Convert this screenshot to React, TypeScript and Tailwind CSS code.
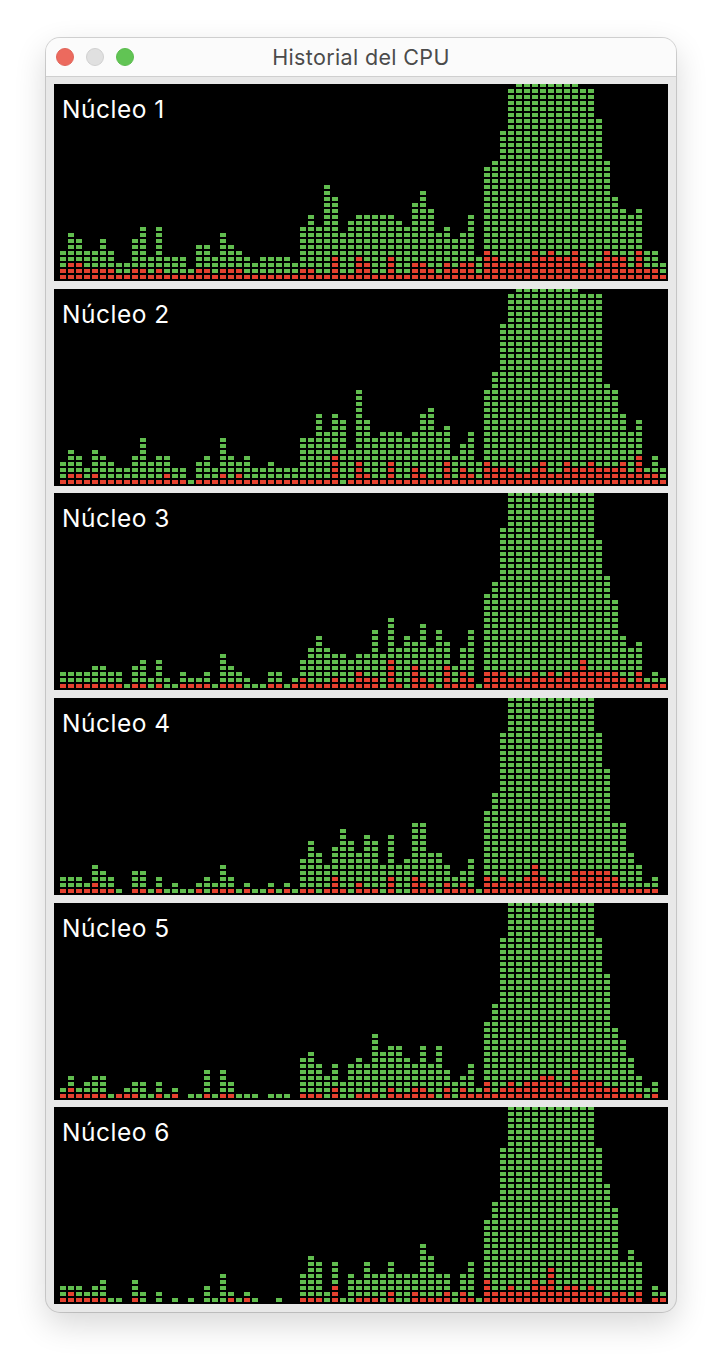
type Core = {
  heights: number[]
  reds: number[]
}

// heights = cells per column, reds = bitmask of red cells counted from the bottom
const cores: Core[] = [
  {
    heights: [
      5, 8, 7, 5, 5, 7, 5, 3, 3, 7, 9, 4, 9, 4, 4, 4, 2, 6, 6, 4, 8, 6, 5, 4, 3, 4, 4,
      4, 4, 3, 9, 11, 9, 16, 14, 8, 10, 11, 11, 11, 11, 11, 10, 9, 13, 15, 12, 8, 9, 7, 8, 11, 4,
      19, 20, 25, 32, 33, 33, 33, 33, 33, 33, 33, 33, 32, 32, 27, 20, 14, 12, 11, 12, 5, 5, 3,
    ],
    reds: [
      3, 7, 7, 3, 3, 3, 3, 1, 1, 3, 3, 1, 3, 1, 1, 1, 1, 3, 3, 1, 3, 3, 3, 1, 1, 1, 1,
      1, 1, 1, 3, 3, 1, 1, 15, 1, 1, 15, 7, 1, 1, 15, 1, 1, 7, 7, 3, 1, 7, 3, 7, 7, 1,
      31, 15, 7, 7, 7, 7, 31, 15, 31, 15, 15, 31, 7, 3, 7, 31, 15, 15, 3, 31, 3, 3, 1,
    ],
  },
  {
    heights: [
      4, 6, 5, 3, 6, 5, 4, 3, 3, 5, 8, 4, 5, 5, 3, 3, 1, 4, 5, 3, 8, 5, 4, 5, 3, 3, 4,
      3, 3, 3, 8, 8, 12, 9, 12, 11, 6, 16, 11, 8, 9, 9, 9, 8, 9, 12, 13, 9, 10, 5, 7, 9, 4,
      16, 19, 27, 32, 33, 33, 33, 33, 33, 33, 33, 33, 32, 32, 32, 17, 16, 12, 9, 11, 3, 5, 3,
    ],
    reds: [
      1, 3, 3, 1, 3, 1, 1, 1, 1, 1, 1, 1, 1, 3, 1, 1, 0, 1, 1, 1, 3, 1, 3, 1, 1, 1, 1,
      1, 1, 1, 1, 1, 1, 1, 31, 0, 1, 15, 3, 1, 1, 15, 1, 1, 7, 3, 1, 1, 15, 1, 7, 3, 1,
      15, 7, 7, 7, 3, 3, 7, 15, 3, 3, 15, 7, 7, 15, 7, 7, 7, 15, 3, 31, 3, 3, 1,
    ],
  },
  {
    heights: [
      3, 3, 3, 3, 4, 4, 3, 3, 1, 4, 5, 2, 5, 2, 1, 3, 2, 2, 3, 1, 6, 4, 3, 2, 1, 1, 3,
      3, 1, 2, 5, 7, 9, 7, 6, 6, 5, 6, 6, 10, 6, 12, 7, 9, 8, 11, 7, 10, 8, 4, 7, 10, 1,
      16, 18, 27, 33, 33, 33, 33, 33, 33, 33, 33, 33, 33, 33, 25, 19, 15, 9, 7, 8, 2, 3, 2,
    ],
    reds: [
      1, 1, 1, 1, 1, 1, 1, 1, 0, 1, 1, 0, 1, 0, 0, 1, 1, 1, 1, 0, 1, 1, 1, 0, 0, 0, 1,
      1, 0, 1, 3, 1, 1, 1, 3, 1, 1, 7, 3, 3, 0, 31, 1, 0, 15, 3, 1, 0, 15, 1, 7, 3, 0,
      7, 7, 7, 3, 3, 3, 7, 3, 7, 3, 7, 7, 31, 7, 7, 7, 7, 3, 1, 7, 1, 1, 1,
    ],
  },
  {
    heights: [
      3, 3, 3, 2, 5, 4, 3, 1, 0, 4, 4, 1, 3, 1, 2, 1, 1, 2, 3, 2, 5, 3, 1, 2, 1, 1, 2,
      1, 2, 1, 6, 9, 7, 5, 8, 11, 9, 7, 10, 9, 5, 10, 5, 6, 12, 12, 7, 7, 5, 3, 4, 6, 1,
      14, 17, 27, 33, 33, 33, 33, 33, 33, 33, 33, 33, 33, 33, 27, 21, 12, 12, 7, 5, 2, 3, 0,
    ],
    reds: [
      1, 1, 1, 1, 3, 1, 1, 0, 0, 1, 1, 0, 1, 0, 0, 0, 0, 1, 0, 1, 1, 1, 0, 1, 0, 0, 1,
      0, 1, 0, 1, 1, 0, 1, 7, 1, 0, 3, 1, 1, 0, 7, 0, 0, 7, 3, 1, 0, 3, 1, 3, 1, 0,
      7, 3, 7, 3, 3, 7, 31, 7, 3, 3, 3, 15, 15, 15, 15, 15, 7, 1, 1, 1, 1, 1, 0,
    ],
  },
  {
    heights: [
      2, 4, 2, 3, 4, 4, 1, 1, 2, 3, 3, 1, 3, 1, 2, 0, 1, 1, 5, 1, 5, 3, 1, 1, 1, 0, 1,
      1, 1, 0, 7, 8, 6, 4, 6, 3, 6, 7, 6, 11, 8, 9, 9, 7, 6, 9, 6, 9, 5, 3, 4, 6, 2,
      13, 16, 27, 33, 33, 33, 33, 33, 33, 33, 33, 33, 33, 33, 27, 21, 12, 10, 7, 4, 2, 3, 0,
    ],
    reds: [
      1, 3, 1, 1, 1, 1, 0, 1, 1, 1, 0, 0, 1, 0, 1, 0, 0, 0, 1, 0, 1, 1, 0, 0, 0, 0, 0,
      0, 0, 0, 1, 1, 1, 0, 3, 0, 0, 1, 1, 1, 0, 3, 1, 1, 3, 3, 1, 0, 3, 0, 3, 1, 1,
      7, 1, 3, 7, 3, 7, 7, 15, 15, 7, 3, 31, 7, 7, 7, 3, 3, 1, 1, 1, 0, 1, 0,
    ],
  },
  {
    heights: [
      3, 3, 3, 2, 3, 4, 1, 1, 0, 4, 2, 0, 2, 0, 1, 0, 1, 0, 3, 1, 5, 2, 1, 2, 1, 0, 0,
      1, 0, 0, 5, 8, 7, 2, 7, 1, 5, 4, 7, 5, 5, 7, 5, 5, 5, 10, 8, 5, 5, 2, 5, 7, 1,
      14, 17, 26, 33, 33, 33, 33, 33, 33, 33, 33, 33, 33, 33, 26, 20, 16, 7, 9, 7, 0, 3, 2,
    ],
    reds: [
      1, 3, 1, 1, 1, 1, 0, 0, 0, 1, 0, 0, 0, 0, 0, 0, 0, 0, 0, 0, 0, 1, 0, 1, 0, 0, 0,
      0, 0, 0, 1, 1, 1, 0, 7, 0, 0, 1, 1, 1, 0, 3, 0, 0, 3, 1, 1, 1, 3, 0, 3, 1, 0,
      15, 3, 3, 7, 3, 3, 15, 7, 63, 3, 7, 7, 3, 7, 3, 1, 3, 3, 1, 3, 0, 1, 1,
    ],
  },
]

function CoreGraph({ core, index }: { core: Core; index: number }) {
  return (
    <div className="relative flex h-[197px] items-end gap-[2px] overflow-hidden bg-black pb-[2px] pl-[6px]">
      <span className="absolute left-[8px] top-[10px] text-[24.5px] leading-[30px] tracking-[0.5px] text-white">
        Núcleo {index + 1}
      </span>
      {core.heights.map((height, col) => (
        <div key={col} className="flex w-[6px] shrink-0 flex-col-reverse gap-[2px]">
          {Array.from({ length: height }, (_, row) => (
            <div
              key={row}
              className={
                row < 31 && core.reds[col] & (1 << row)
                  ? 'h-[4px] w-[6px] shrink-0 bg-[#e5412f]'
                  : 'h-[4px] w-[6px] shrink-0 bg-[#61bd4f]'
              }
            />
          ))}
        </div>
      ))}
    </div>
  )
}

export default function App() {
  return (
    <div className="flex h-[1366px] justify-center bg-white pt-[38px] font-['Inter',sans-serif]">
      <div className="h-[1274px] w-[630px] overflow-hidden rounded-[14px] bg-[#e8e8e8] shadow-[0_0_0_1px_rgba(0,0,0,0.16),0_12px_32px_rgba(0,0,0,0.16)]">
        <div className="relative flex h-[39px] items-center justify-center border-b border-[#cfcfcf] bg-[#fbfbfb]">
          <div className="absolute left-[10px] top-[10px] flex gap-[12px]">
            <span className="h-[18px] w-[18px] rounded-full border border-[#e0655a] bg-[#ec6a5e]" />
            <span className="h-[18px] w-[18px] rounded-full border border-[#d0d0d0] bg-[#e0e0e0]" />
            <span className="h-[18px] w-[18px] rounded-full border border-[#5abb4d] bg-[#61c454]" />
          </div>
          <span className="text-[21.5px] leading-[26px] tracking-[0.35px] text-[#4b4b4b]">Historial del CPU</span>
        </div>
        <div className="flex flex-col gap-[7.6px] px-[8px] pt-[7.2px]">
          {cores.map((core, index) => (
            <CoreGraph key={index} core={core} index={index} />
          ))}
        </div>
      </div>
    </div>
  )
}
